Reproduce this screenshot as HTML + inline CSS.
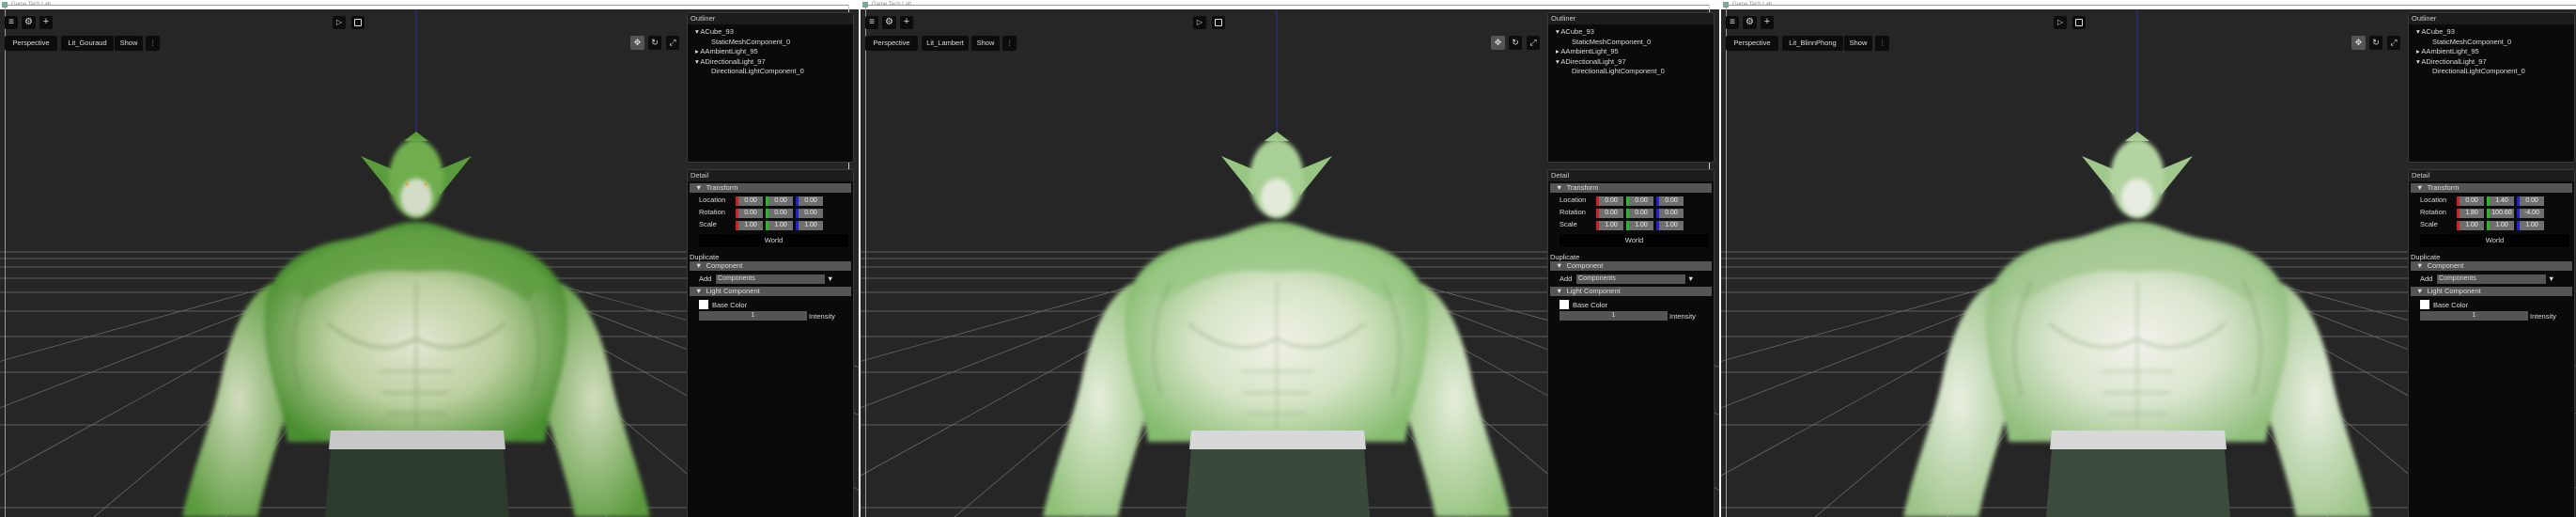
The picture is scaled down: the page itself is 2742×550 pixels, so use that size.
<!DOCTYPE html>
<html><head><meta charset="utf-8"><style>
*{margin:0;padding:0;box-sizing:border-box}
body{width:2742px;height:550px;overflow:hidden;background:#fff;font-family:"Liberation Sans",sans-serif;position:relative}
.p{position:absolute;top:0;height:550px;overflow:hidden;background:#262626}
.tb{position:absolute;left:0;top:0;right:0;height:10px;background:#fff;font-size:6px;color:#888;line-height:10px;padding-left:12px}
.tb i{position:absolute;left:2px;top:2px;width:6px;height:6px;background:#7a9;display:block}
.fl{position:absolute;background:#999}
.b{position:absolute;background:#0c0c0c;border-radius:2px;color:#ddd;font-size:7.5px;text-align:center}
.op{position:absolute;left:731px;width:178px;background:#0a0a0a;border:1px solid #3a3a3a;border-radius:3px}
.h{position:absolute;left:0;right:0;top:0;height:12px;background:#1c1c1c;color:#ccc;font-size:7.5px;line-height:12px;padding-left:3px}
.t{position:absolute;color:#ddd;font-size:7.5px;white-space:nowrap}
.bar{position:absolute;left:2px;right:2px;height:10px;background:#555;color:#ddd;font-size:7.5px;line-height:10px;padding-left:6px}
.f{position:absolute;width:29px;height:10px;background:#6e6e6e;color:#eee;font-size:7px;line-height:10px;text-align:center}
.f.r{border-left:3px solid #c22}.f.g{border-left:3px solid #2b2}.f.u{border-left:3px solid #22c}
svg{position:absolute;left:0;top:0}
</style></head><body>
<svg width="0" height="0" style="position:absolute">
<defs>
<filter id="bl"><feGaussianBlur stdDeviation="2.5"/></filter>
<filter id="bl2"><feGaussianBlur stdDeviation="6"/></filter>
<g id="grid" stroke="#707070" stroke-width="0.7">
<line x1="0" y1="268" x2="731" y2="268"/><line x1="0" y1="275" x2="731" y2="275"/><line x1="0" y1="284" x2="731" y2="284"/><line x1="0" y1="296" x2="731" y2="296"/><line x1="0" y1="311" x2="731" y2="311"/><line x1="0" y1="331" x2="731" y2="331"/><line x1="0" y1="358" x2="731" y2="358"/><line x1="0" y1="396" x2="731" y2="396"/><line x1="0" y1="452" x2="731" y2="452"/><line x1="0" y1="540" x2="731" y2="540"/>
<line x1="443" y1="262" x2="-600" y2="550"/><line x1="443" y1="262" x2="-300" y2="550"/><line x1="443" y1="262" x2="-80" y2="550"/><line x1="443" y1="262" x2="100" y2="550"/><line x1="443" y1="262" x2="240" y2="550"/><line x1="443" y1="262" x2="350" y2="550"/><line x1="443" y1="262" x2="443" y2="550"/><line x1="443" y1="262" x2="536" y2="550"/><line x1="443" y1="262" x2="646" y2="550"/><line x1="443" y1="262" x2="786" y2="550"/><line x1="443" y1="262" x2="966" y2="550"/><line x1="443" y1="262" x2="1200" y2="550"/><line x1="443" y1="262" x2="1500" y2="550"/>
</g>
<path id="armL" d="M292,300 C262,312 244,360 236,400 C226,450 204,500 194,550 L274,550 C284,500 304,450 314,400 Z"/>
<path id="armR" d="M594,300 C624,312 642,360 650,400 C660,450 682,500 692,550 L612,550 C602,500 582,450 572,400 Z"/>
<path id="torso" d="M282,330 C285,290 318,262 368,255 C400,250 418,236 443,236 C468,236 486,250 518,255 C568,262 601,290 604,330 C608,390 585,425 580,470 L306,470 C301,425 278,390 282,330Z"/>
<g id="det" fill="none" stroke-linecap="round">
<path d="M350,345 Q400,385 443,360 Q486,385 536,345" stroke-width="3"/>
<path d="M443,300 L443,455" stroke-width="2"/>
<path d="M405,395 L481,395 M408,418 L478,418 M412,440 L474,440" stroke-width="2"/>
<path d="M330,300 Q300,360 320,420 M556,300 Q586,360 566,420" stroke-width="3"/>
</g>
</defs></svg>

<div class="p" style="left:0;width:914px">
<svg width="914" height="550">
<defs>
<radialGradient id="s1" cx="50%" cy="55%" r="55%"><stop offset="0" stop-color="#e2e7d2"/><stop offset=".5" stop-color="#bdd0a0"/><stop offset="1" stop-color="#4a8f30"/></radialGradient>
<radialGradient id="a1" cx="50%" cy="50%" r="60%"><stop offset="0" stop-color="#d3ddbf"/><stop offset="1" stop-color="#5a9a3c"/></radialGradient>
</defs>
<use href="#grid"/>
<rect x="0" y="10" width="914" height="252" fill="#262626"/>
<line x1="443" y1="10" x2="443" y2="150" stroke="#3030a0" stroke-width="1"/>
<g filter="url(#bl)">
<use href="#armL" fill="url(#a1)"/><use href="#armR" fill="url(#a1)"/>
<use href="#torso" fill="url(#s1)"/>
<path d="M300,300 C330,262 400,255 420,245 L466,245 C486,255 556,262 586,300 L560,320 C520,290 480,285 443,290 C406,285 366,290 326,320 Z" fill="#5f9f40" opacity=".8"/>
</g>
<use href="#det" stroke="#6a8a50" opacity=".45" filter="url(#bl)"/>
<path d="M384,166 L422,182 L418,208 Z M502,166 L464,182 L468,208 Z" fill="#5a9c3c"/>
<path d="M430,150 L443,140 L456,150 Z" fill="#5a9c3c"/>
<ellipse cx="443" cy="190" rx="29" ry="42" fill="#6fae4e" filter="url(#bl)"/>
<ellipse cx="443" cy="210" rx="17" ry="20" fill="#d2dcc6" filter="url(#bl)"/>
<circle cx="433" cy="196" r="1.5" fill="#f0a020"/><circle cx="453" cy="196" r="1.5" fill="#f0a020"/>
<path d="M352,458 L536,458 L538,478 L350,478 Z" fill="#c8c8c8"/>
<path d="M352,478 L536,478 L542,550 L346,550 Z" fill="#2c3b2c"/>
</svg>
<div class="tb"><i></i>Game Tech Lab</div>
<div class="fl" style="left:5px;top:5px;width:899px;height:1px"></div>
<div class="fl" style="left:5px;top:5px;width:1px;height:545px"></div>
<div class="fl" style="left:903px;top:5px;width:1px;height:545px;background:#ccc"></div>
<div class="b" style="left:5px;top:17px;width:14px;height:14px;font-size:10px;line-height:13px">≡</div>
<div class="b" style="left:23px;top:17px;width:15px;height:14px;font-size:10px;line-height:14px">⚙</div>
<div class="b" style="left:42px;top:17px;width:14px;height:14px;font-size:11px;line-height:13px">+</div>
<div class="b" style="left:354px;top:17px;width:14px;height:14px;font-size:8px;line-height:14px">▷</div>
<div class="b" style="left:374px;top:17px;width:14px;height:14px"><div style="margin:3px;width:8px;height:8px;border:1px solid #ddd;border-radius:1px"></div></div>
<div class="b" style="left:5px;top:38px;width:56px;height:16px;line-height:16px">Perspective</div>
<div class="b" style="left:65px;top:38px;width:56px;height:16px;line-height:16px">Lit_Gouraud</div>
<div class="b" style="left:122px;top:38px;width:30px;height:16px;line-height:16px">Show</div>
<div class="b" style="left:155px;top:38px;width:15px;height:16px;line-height:16px;font-size:9px">⫶</div>
<div class="b" style="left:671px;top:38px;width:15px;height:15px;line-height:15px;background:#555;font-size:9px">✥</div>
<div class="b" style="left:690px;top:38px;width:14px;height:15px;line-height:15px;font-size:9px">↻</div>
<div class="b" style="left:709px;top:38px;width:14px;height:15px;line-height:15px;font-size:9px">⤢</div>
<div class="op" style="top:13px;height:160px"><div class="h">Outliner</div>
<div class="t" style="left:8px;top:15px">▾ ACube_93</div><div class="t" style="left:25px;top:26px">StaticMeshComponent_0</div>
<div class="t" style="left:8px;top:36px">▸ AAmbientLight_95</div><div class="t" style="left:8px;top:47px">▾ ADirectionalLight_97</div>
<div class="t" style="left:25px;top:57px">DirectionalLightComponent_0</div></div>
<div class="op" style="top:180px;height:380px"><div class="h">Detail</div>
<div class="bar" style="top:14px">▼ &nbsp;Transform</div>
<div class="t" style="left:12px;top:27px">Location</div><div class="t" style="left:12px;top:40px">Rotation</div><div class="t" style="left:12px;top:53px">Scale</div>
<div class="f r" style="left:51px;top:28px">0.00</div><div class="f g" style="left:83px;top:28px">0.00</div><div class="f u" style="left:115px;top:28px">0.00</div>
<div class="f r" style="left:51px;top:41px">0.00</div><div class="f g" style="left:83px;top:41px">0.00</div><div class="f u" style="left:115px;top:41px">0.00</div>
<div class="f r" style="left:51px;top:54px">1.00</div><div class="f g" style="left:83px;top:54px">1.00</div><div class="f u" style="left:115px;top:54px">1.00</div>
<div style="position:absolute;left:12px;top:68px;width:159px;height:14px;background:#000;color:#ddd;font-size:7.5px;line-height:14px;text-align:center">World</div>
<div class="t" style="left:2px;top:88px">Duplicate</div>
<div class="bar" style="top:97px">▼ &nbsp;Component</div>
<div class="t" style="left:12px;top:111px">Add</div>
<div style="position:absolute;left:30px;top:111px;width:116px;height:10px;background:#555;color:#ddd;font-size:7px;line-height:10px;padding-left:2px">Components</div>
<div class="t" style="left:148px;top:111px">▼</div>
<div class="bar" style="top:124px">▼ &nbsp;Light Component</div>
<div style="position:absolute;left:12px;top:138px;width:10px;height:10px;background:#fff"></div>
<div class="t" style="left:26px;top:139px">Base Color</div>
<div style="position:absolute;left:12px;top:150px;width:115px;height:10px;background:#555;color:#ddd;font-size:7px;line-height:10px;text-align:center">1</div>
<div class="t" style="left:129px;top:151px">Intensity</div>
</div>
</div>

<div class="p" style="left:916px;width:914px">
<svg width="914" height="550">
<defs>
<radialGradient id="s2" cx="50%" cy="55%" r="55%"><stop offset="0" stop-color="#f0f2e8"/><stop offset=".5" stop-color="#d6e4c6"/><stop offset="1" stop-color="#86bc70"/></radialGradient>
<radialGradient id="a2" cx="50%" cy="50%" r="60%"><stop offset="0" stop-color="#e6eddb"/><stop offset="1" stop-color="#90c078"/></radialGradient>
</defs>
<use href="#grid"/>
<rect x="0" y="10" width="914" height="252" fill="#262626"/>
<line x1="443" y1="10" x2="443" y2="150" stroke="#3030a0" stroke-width="1"/>
<g filter="url(#bl)">
<use href="#armL" fill="url(#a2)"/><use href="#armR" fill="url(#a2)"/>
<use href="#torso" fill="url(#s2)"/>
<path d="M300,300 C330,262 400,255 420,245 L466,245 C486,255 556,262 586,300 L560,320 C520,290 480,285 443,290 C406,285 366,290 326,320 Z" fill="#98c884" opacity=".8"/>
</g>
<use href="#det" stroke="#7a9a68" opacity=".4" filter="url(#bl)"/>
<path d="M384,166 L422,182 L418,208 Z M502,166 L464,182 L468,208 Z" fill="#96c682"/>
<path d="M430,150 L443,140 L456,150 Z" fill="#96c682"/>
<ellipse cx="443" cy="190" rx="29" ry="42" fill="#a8d094" filter="url(#bl)"/>
<ellipse cx="443" cy="210" rx="17" ry="20" fill="#e4ebdc" filter="url(#bl)"/>
<path d="M352,458 L536,458 L538,478 L350,478 Z" fill="#d8d8d8"/>
<path d="M352,478 L536,478 L542,550 L346,550 Z" fill="#3a4a3a"/>
</svg>
<div class="tb"><i></i>Game Tech Lab</div>
<div class="fl" style="left:5px;top:5px;width:899px;height:1px"></div>
<div class="fl" style="left:5px;top:5px;width:1px;height:545px"></div>
<div class="fl" style="left:903px;top:5px;width:1px;height:545px;background:#ccc"></div>
<div class="b" style="left:5px;top:17px;width:14px;height:14px;font-size:10px;line-height:13px">≡</div>
<div class="b" style="left:23px;top:17px;width:15px;height:14px;font-size:10px;line-height:14px">⚙</div>
<div class="b" style="left:42px;top:17px;width:14px;height:14px;font-size:11px;line-height:13px">+</div>
<div class="b" style="left:354px;top:17px;width:14px;height:14px;font-size:8px;line-height:14px">▷</div>
<div class="b" style="left:374px;top:17px;width:14px;height:14px"><div style="margin:3px;width:8px;height:8px;border:1px solid #ddd;border-radius:1px"></div></div>
<div class="b" style="left:5px;top:38px;width:56px;height:16px;line-height:16px">Perspective</div>
<div class="b" style="left:65px;top:38px;width:50px;height:16px;line-height:16px">Lit_Lambert</div>
<div class="b" style="left:118px;top:38px;width:30px;height:16px;line-height:16px">Show</div>
<div class="b" style="left:151px;top:38px;width:15px;height:16px;line-height:16px;font-size:9px">⫶</div>
<div class="b" style="left:671px;top:38px;width:15px;height:15px;line-height:15px;background:#555;font-size:9px">✥</div>
<div class="b" style="left:690px;top:38px;width:14px;height:15px;line-height:15px;font-size:9px">↻</div>
<div class="b" style="left:709px;top:38px;width:14px;height:15px;line-height:15px;font-size:9px">⤢</div>
<div class="op" style="top:13px;height:160px"><div class="h">Outliner</div>
<div class="t" style="left:8px;top:15px">▾ ACube_93</div><div class="t" style="left:25px;top:26px">StaticMeshComponent_0</div>
<div class="t" style="left:8px;top:36px">▸ AAmbientLight_95</div><div class="t" style="left:8px;top:47px">▾ ADirectionalLight_97</div>
<div class="t" style="left:25px;top:57px">DirectionalLightComponent_0</div></div>
<div class="op" style="top:180px;height:380px"><div class="h">Detail</div>
<div class="bar" style="top:14px">▼ &nbsp;Transform</div>
<div class="t" style="left:12px;top:27px">Location</div><div class="t" style="left:12px;top:40px">Rotation</div><div class="t" style="left:12px;top:53px">Scale</div>
<div class="f r" style="left:51px;top:28px">0.00</div><div class="f g" style="left:83px;top:28px">0.00</div><div class="f u" style="left:115px;top:28px">0.00</div>
<div class="f r" style="left:51px;top:41px">0.00</div><div class="f g" style="left:83px;top:41px">0.00</div><div class="f u" style="left:115px;top:41px">0.00</div>
<div class="f r" style="left:51px;top:54px">1.00</div><div class="f g" style="left:83px;top:54px">1.00</div><div class="f u" style="left:115px;top:54px">1.00</div>
<div style="position:absolute;left:12px;top:68px;width:159px;height:14px;background:#000;color:#ddd;font-size:7.5px;line-height:14px;text-align:center">World</div>
<div class="t" style="left:2px;top:88px">Duplicate</div>
<div class="bar" style="top:97px">▼ &nbsp;Component</div>
<div class="t" style="left:12px;top:111px">Add</div>
<div style="position:absolute;left:30px;top:111px;width:116px;height:10px;background:#555;color:#ddd;font-size:7px;line-height:10px;padding-left:2px">Components</div>
<div class="t" style="left:148px;top:111px">▼</div>
<div class="bar" style="top:124px">▼ &nbsp;Light Component</div>
<div style="position:absolute;left:12px;top:138px;width:10px;height:10px;background:#fff"></div>
<div class="t" style="left:26px;top:139px">Base Color</div>
<div style="position:absolute;left:12px;top:150px;width:115px;height:10px;background:#555;color:#ddd;font-size:7px;line-height:10px;text-align:center">1</div>
<div class="t" style="left:129px;top:151px">Intensity</div>
</div>
</div>

<div class="p" style="left:1832px;width:910px">
<svg width="910" height="550">
<defs>
<radialGradient id="s3" cx="50%" cy="55%" r="55%"><stop offset="0" stop-color="#f2f3ec"/><stop offset=".5" stop-color="#dae5ce"/><stop offset="1" stop-color="#92bf7e"/></radialGradient>
<radialGradient id="a3" cx="50%" cy="50%" r="60%"><stop offset="0" stop-color="#eaefe2"/><stop offset="1" stop-color="#9cc488"/></radialGradient>
</defs>
<use href="#grid"/>
<rect x="0" y="10" width="910" height="252" fill="#262626"/>
<line x1="443" y1="10" x2="443" y2="150" stroke="#3030a0" stroke-width="1"/>
<g filter="url(#bl)">
<use href="#armL" fill="url(#a3)"/><use href="#armR" fill="url(#a3)"/>
<use href="#torso" fill="url(#s3)"/>
<path d="M300,300 C330,262 400,255 420,245 L466,245 C486,255 556,262 586,300 L560,320 C520,290 480,285 443,290 C406,285 366,290 326,320 Z" fill="#a2c890" opacity=".8"/>
</g>
<use href="#det" stroke="#7a9a68" opacity=".4" filter="url(#bl)"/>
<path d="M384,166 L422,182 L418,208 Z M502,166 L464,182 L468,208 Z" fill="#a0c88c"/>
<path d="M430,150 L443,140 L456,150 Z" fill="#a0c88c"/>
<ellipse cx="443" cy="190" rx="29" ry="42" fill="#b2d4a0" filter="url(#bl)"/>
<ellipse cx="443" cy="210" rx="17" ry="20" fill="#e8ede2" filter="url(#bl)"/>
<path d="M352,458 L536,458 L538,478 L350,478 Z" fill="#d8d8d8"/>
<path d="M352,478 L536,478 L542,550 L346,550 Z" fill="#3c4c3c"/>
</svg>
<div class="tb"><i></i>Game Tech Lab</div>
<div class="fl" style="left:5px;top:5px;width:905px;height:1px"></div>
<div class="fl" style="left:5px;top:5px;width:1px;height:545px"></div>
<div class="b" style="left:5px;top:17px;width:14px;height:14px;font-size:10px;line-height:13px">≡</div>
<div class="b" style="left:23px;top:17px;width:15px;height:14px;font-size:10px;line-height:14px">⚙</div>
<div class="b" style="left:42px;top:17px;width:14px;height:14px;font-size:11px;line-height:13px">+</div>
<div class="b" style="left:354px;top:17px;width:14px;height:14px;font-size:8px;line-height:14px">▷</div>
<div class="b" style="left:374px;top:17px;width:14px;height:14px"><div style="margin:3px;width:8px;height:8px;border:1px solid #ddd;border-radius:1px"></div></div>
<div class="b" style="left:5px;top:38px;width:56px;height:16px;line-height:16px">Perspective</div>
<div class="b" style="left:65px;top:38px;width:65px;height:16px;line-height:16px">Lit_BlinnPhong</div>
<div class="b" style="left:131px;top:38px;width:30px;height:16px;line-height:16px">Show</div>
<div class="b" style="left:164px;top:38px;width:15px;height:16px;line-height:16px;font-size:9px">⫶</div>
<div class="b" style="left:671px;top:38px;width:15px;height:15px;line-height:15px;background:#555;font-size:9px">✥</div>
<div class="b" style="left:690px;top:38px;width:14px;height:15px;line-height:15px;font-size:9px">↻</div>
<div class="b" style="left:709px;top:38px;width:14px;height:15px;line-height:15px;font-size:9px">⤢</div>
<div class="op" style="top:13px;height:160px"><div class="h">Outliner</div>
<div class="t" style="left:8px;top:15px">▾ ACube_93</div><div class="t" style="left:25px;top:26px">StaticMeshComponent_0</div>
<div class="t" style="left:8px;top:36px">▸ AAmbientLight_95</div><div class="t" style="left:8px;top:47px">▾ ADirectionalLight_97</div>
<div class="t" style="left:25px;top:57px">DirectionalLightComponent_0</div></div>
<div class="op" style="top:180px;height:380px"><div class="h">Detail</div>
<div class="bar" style="top:14px">▼ &nbsp;Transform</div>
<div class="t" style="left:12px;top:27px">Location</div><div class="t" style="left:12px;top:40px">Rotation</div><div class="t" style="left:12px;top:53px">Scale</div>
<div class="f r" style="left:51px;top:28px">0.00</div><div class="f g" style="left:83px;top:28px">1.40</div><div class="f u" style="left:115px;top:28px">0.00</div>
<div class="f r" style="left:51px;top:41px">1.80</div><div class="f g" style="left:83px;top:41px">100.60</div><div class="f u" style="left:115px;top:41px">-4.00</div>
<div class="f r" style="left:51px;top:54px">1.00</div><div class="f g" style="left:83px;top:54px">1.00</div><div class="f u" style="left:115px;top:54px">1.00</div>
<div style="position:absolute;left:12px;top:68px;width:159px;height:14px;background:#000;color:#ddd;font-size:7.5px;line-height:14px;text-align:center">World</div>
<div class="t" style="left:2px;top:88px">Duplicate</div>
<div class="bar" style="top:97px">▼ &nbsp;Component</div>
<div class="t" style="left:12px;top:111px">Add</div>
<div style="position:absolute;left:30px;top:111px;width:116px;height:10px;background:#555;color:#ddd;font-size:7px;line-height:10px;padding-left:2px">Components</div>
<div class="t" style="left:148px;top:111px">▼</div>
<div class="bar" style="top:124px">▼ &nbsp;Light Component</div>
<div style="position:absolute;left:12px;top:138px;width:10px;height:10px;background:#fff"></div>
<div class="t" style="left:26px;top:139px">Base Color</div>
<div style="position:absolute;left:12px;top:150px;width:115px;height:10px;background:#555;color:#ddd;font-size:7px;line-height:10px;text-align:center">1</div>
<div class="t" style="left:129px;top:151px">Intensity</div>
</div>
</div>
</body></html>
